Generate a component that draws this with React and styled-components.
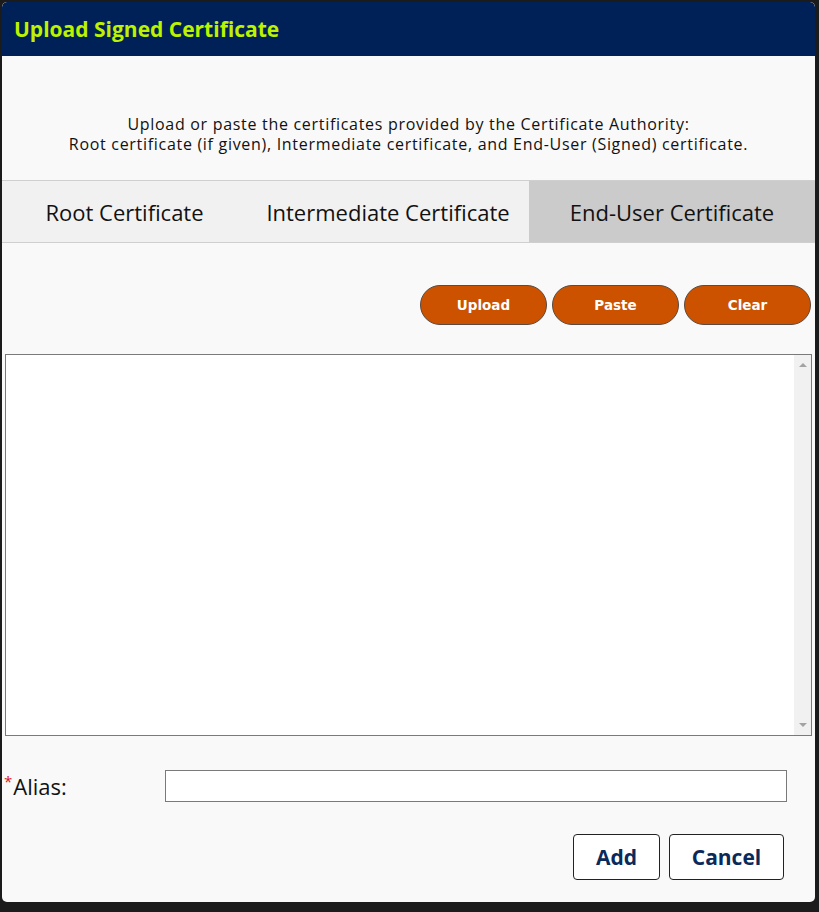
import React, { useState } from "react";
import styled, { createGlobalStyle } from "styled-components";

const GlobalStyle = createGlobalStyle`
  html, body {
    margin: 0;
    background: #1b1b1b;
  }
  body {
    font-family: "Open Sans", Lato, sans-serif;
    color: #111;
  }
`;

const Page = styled.div`
  padding: 2px;
  width: 819px;
  height: 912px;
  box-sizing: border-box;
`;

const Modal = styled.div`
  width: 813px;
  height: 900px;
  background: #f9f9f9;
  border-radius: 5px;
  overflow: hidden;
  display: flex;
  flex-direction: column;
`;

const Header = styled.div`
  height: 54px;
  background: #002157;
  border-radius: 5px 5px 0 0;
  display: flex;
  align-items: center;
  padding-left: 12px;
`;

const Title = styled.h1`
  margin: 0;
  font-size: 21px;
  font-weight: 700;
  color: #bdf200;
`;

const Intro = styled.p`
  margin: 58px 0 26px;
  text-align: center;
  font-size: 16px;
  letter-spacing: 0.7px;
  line-height: 20px;
`;

const Tabs = styled.div`
  display: grid;
  grid-template-columns: 245px 282px 1fr;
  height: 61px;
  border-top: 1px solid #cfcfcf;
  border-bottom: 1px solid #cfcfcf;
  background: #f1f1f1;
`;

const Tab = styled.button`
  border: none;
  margin: 0;
  padding: 0;
  font-family: inherit;
  font-size: 22px;
  color: #111;
  background: ${({ $active }) => ($active ? "#cbcbcb" : "transparent")};
  cursor: pointer;
`;

const Toolbar = styled.div`
  display: flex;
  justify-content: flex-end;
  gap: 5px;
  padding: 42px 4px 0 0;
`;

const PillButton = styled.button`
  width: 127px;
  height: 40px;
  border-radius: 20px;
  border: 1px solid #5a4a40;
  background: #cc5200;
  color: #fff;
  font-family: "DejaVu Sans", sans-serif;
  font-weight: 700;
  font-size: 13.5px;
  cursor: pointer;
`;

const Editor = styled.div`
  display: flex;
  margin: 29px 0 0 3px;
  width: 807px;
  height: 382px;
  box-sizing: border-box;
  border: 1px solid #7a7a7a;
  background: #fff;
`;

const CertText = styled.textarea`
  flex: 1;
  border: none;
  background: transparent;
  resize: none;
  overflow: hidden;
  outline: none;
`;

const Scrollbar = styled.div`
  width: 17px;
  background: #f1f1f1;
  display: flex;
  flex-direction: column;
  justify-content: space-between;
  align-items: center;
  padding: 8px 0;
`;

const Arrow = styled.span`
  width: 0;
  height: 0;
  border-left: 4px solid transparent;
  border-right: 4px solid transparent;
  ${({ $down }) =>
    $down ? "border-top: 4px solid #a3a3a3;" : "border-bottom: 4px solid #a3a3a3;"}
`;

const AliasRow = styled.div`
  display: flex;
  align-items: center;
  padding: 34px 0 0 2px;
`;

const Label = styled.label`
  width: 161px;
  font-size: 22px;
  color: #111;
`;

const Req = styled.span`
  color: #e0102a;
  font-size: 15px;
  vertical-align: top;
  margin-right: 1px;
`;

const TextInput = styled.input`
  width: 622px;
  height: 32px;
  box-sizing: border-box;
  border: 1px solid #7a7a7a;
  background: #fff;
  outline: none;
`;

const Footer = styled.div`
  display: flex;
  justify-content: flex-end;
  gap: 9px;
  padding: 32px 31px 0 0;
`;

const ActionButton = styled.button`
  height: 46px;
  width: ${({ $w }) => $w}px;
  padding: 0;
  border: 1px solid #222;
  border-radius: 4px;
  background: #fff;
  color: #0a2a5c;
  font-family: inherit;
  font-weight: 700;
  font-size: 21px;
  cursor: pointer;
`;

const tabs = ["Root Certificate", "Intermediate Certificate", "End-User Certificate"];

export default function App() {
  const [active, setActive] = useState(2);
  return (
    <Page>
      <GlobalStyle />
      <Modal>
        <Header>
          <Title>Upload Signed Certificate</Title>
        </Header>
        <Intro>
          Upload or paste the certificates provided by the Certificate Authority:
          <br />
          Root certificate (if given), Intermediate certificate, and End-User (Signed) certificate.
        </Intro>
        <Tabs>
          {tabs.map((t, i) => (
            <Tab key={t} $active={i === active} onClick={() => setActive(i)}>
              {t}
            </Tab>
          ))}
        </Tabs>
        <Toolbar>
          <PillButton>Upload</PillButton>
          <PillButton>Paste</PillButton>
          <PillButton>Clear</PillButton>
        </Toolbar>
        <Editor>
          <CertText />
          <Scrollbar>
            <Arrow />
            <Arrow $down />
          </Scrollbar>
        </Editor>
        <AliasRow>
          <Label>
            <Req>*</Req>Alias:
          </Label>
          <TextInput />
        </AliasRow>
        <Footer>
          <ActionButton $w={87}>Add</ActionButton>
          <ActionButton $w={115}>Cancel</ActionButton>
        </Footer>
      </Modal>
    </Page>
  );
}
